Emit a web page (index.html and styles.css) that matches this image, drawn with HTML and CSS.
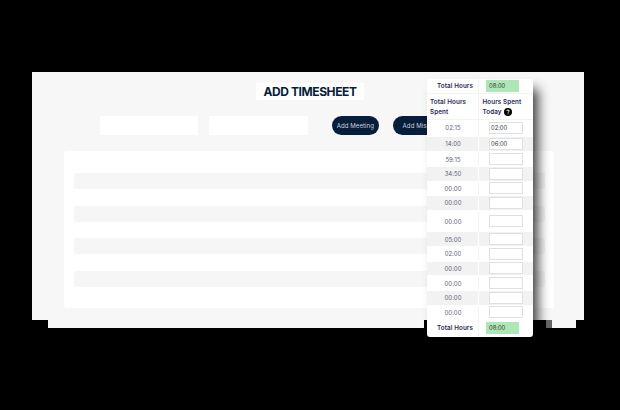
FILE: index.html
```html
<!DOCTYPE html>
<html lang="en">
<head>
<meta charset="utf-8">
<title>Add Timesheet</title>
<link rel="stylesheet" href="styles.css">
</head>
<body>
<main class="sheet">
  <h1 class="title"><span>ADD TIMESHEET</span></h1>
  <div class="toolbar">
    <div class="field"></div>
    <div class="field"></div>
    <div class="btn first"><span>Add Meeting</span></div>
    <div class="btn"><span>Add Misc</span></div>
  </div>
  <section class="panel">
    <div class="stripe"></div>
    <div class="stripe"></div>
    <div class="stripe"></div>
    <div class="stripe"></div>
  </section>
</main>
<div class="footer"><i class="long"></i><i class="dim"></i><i class="end"></i></div>
<aside class="hours">
  <div class="row total"><b>Total Hours</b><div><span class="sum">08:00</span></div></div>
  <div class="row head"><b>Total Hours<br>Spent</b><b class="today">Hours Spent<br>Today <svg viewBox="0 0 8 8"><circle cx="4" cy="4" r="4"/><path d="M2.8 3.1Q2.9 2 4 2Q5.2 2 5.2 3Q5.2 3.6 4.5 3.9Q4 4.2 4 4.7M4 5.4V6.1"/></svg></b></div>
  <div class="row r1"><span>02:15</span><div><span class="box">02:00</span></div></div>
  <div class="row r2 alt"><span>14:00</span><div><span class="box">06:00</span></div></div>
  <div class="row"><span>59:15</span><div><span class="box"></span></div></div>
  <div class="row alt"><span>34:50</span><div><span class="box"></span></div></div>
  <div class="row"><span>00:00</span><div><span class="box"></span></div></div>
  <div class="row alt"><span>00:00</span><div><span class="box"></span></div></div>
  <div class="row tall"><span>00:00</span><div><span class="box"></span></div></div>
  <div class="row alt"><span>05:00</span><div><span class="box"></span></div></div>
  <div class="row"><span>02:00</span><div><span class="box"></span></div></div>
  <div class="row alt"><span>00:00</span><div><span class="box"></span></div></div>
  <div class="row"><span>00:00</span><div><span class="box"></span></div></div>
  <div class="row alt"><span>00:00</span><div><span class="box"></span></div></div>
  <div class="row"><span>00:00</span><div><span class="box"></span></div></div>
  <div class="row total bottom"><b>Total Hours</b><div><span class="sum">08:00</span></div></div>
</aside>
</body>
</html>
```
FILE: styles.css
```css
* { box-sizing: border-box; }
body {
  margin: 0;
  height: 410px;
  padding: 72px 36px 0 32px;
  background: #000;
  overflow: hidden;
  font-family: Inter, "Liberation Sans", sans-serif;
}
.sheet {
  height: 248px;
  padding: 11px 30.5px 0 32.4px;
  background: #f7f7f7;
}
.title {
  width: 108px;
  height: 17px;
  margin: 0 0 0 191.6px;
  background: #fff;
  color: #061d3b;
  font: bold 12px/17px Inter, sans-serif;
  letter-spacing: -0.4px;
  text-align: center;
  white-space: nowrap;
}
.toolbar {
  display: flex;
  gap: 11px;
  margin: 16px 0 0 35.2px;
}
.field { width: 98.5px; height: 19px; background: #fff; }
.btn {
  width: 47.5px;
  height: 19px;
  border-radius: 10px;
  background: #061d3b;
  color: #c9d0d8;
  font-size: 6.1px;
  letter-spacing: 0.05px;
  line-height: 20px;
  text-align: center;
  white-space: nowrap;
}
.btn.first { margin: 0 2.5px 0 13px; }
.panel {
  display: flex;
  flex-direction: column;
  gap: 16.5px;
  height: 157px;
  margin-top: 16px;
  padding: 22px 8.5px 0 9.5px;
  border-radius: 3px;
  background: #fff;
}
.stripe { height: 16px; flex: none; border-radius: 2px; background: #f6f6f6; }
.footer { display: flex; height: 8px; padding-left: 16px; }
.footer i { background: #f7f7f7; }
.long { width: 376px; }
.footer .dim { width: 6px; margin-left: 122px; background: #666; }
.end { width: 24px; }

/* Hours card floating above the sheet */
.hours {
  position: absolute;
  left: 427px;
  top: 79px;
  width: 106px;
  height: 257.5px;
  border-radius: 3px;
  background: #fff;
  box-shadow: 7px 8px 12px -2px rgba(0, 0, 0, .75);
  color: #5c6080;
  font-size: 6px;
}
.row {
  display: grid;
  grid-template-columns: 52px 54px;
  height: 14.67px;
  align-items: center;
  text-align: center;
  border-bottom: 1px solid #fff;
  background: linear-gradient(90deg, transparent 51px, #f3f3f3 51px, #f3f3f3 52px, transparent 52px);
}
.alt { background: linear-gradient(90deg, #f2f2f2 51px, #fff 51px, #fff 52px, #f2f2f2 52px); }
.row b {
  color: #2b2a58;
  font-size: 6.3px;
  font-weight: 600;
  letter-spacing: 0.1px;
  white-space: nowrap;
}
.total { height: 14.5px; border-bottom-color: #f3f3f3; }
.total b { padding-left: 4px; }
.bottom { height: 16px; border: 0; }
.head { height: 26px; line-height: 10px; padding-top: 1px; text-align: left; border-bottom-color: #f3f3f3; }
.head b { padding-left: 3px; }
.head .today { padding-left: 3.5px; }
.head svg { width: 8px; height: 8px; margin-left: 0.5px; vertical-align: -2px; }
.head path { fill: none; stroke: #fff; stroke-width: 1; }
.r1 { height: 17px; }
.r2 { height: 15.7px; }
.tall { height: 21.5px; }
.box, .sum {
  display: block;
  width: 34px;
  height: 12px;
  margin-left: 10px;
  padding-left: 1px;
  border: 1px solid #e0e0e0;
  background: #fff;
  color: #333;
  font-size: 5.8px;
  line-height: 10px;
  text-align: left;
}
.sum {
  width: 33px;
  margin-left: 7px;
  padding-left: 2px;
  border-color: #ade7b5;
  background: #ade7b5;
}
```
